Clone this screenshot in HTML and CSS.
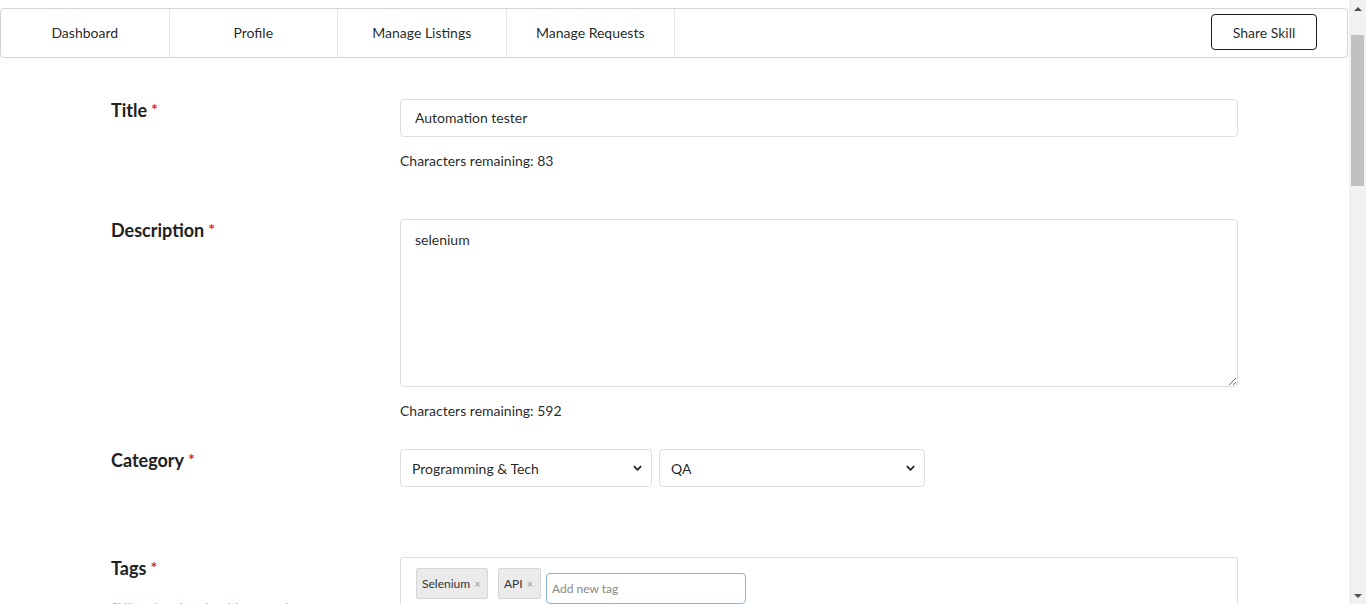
FILE: index.html
```html
<!DOCTYPE html>
<html>
<head>
<meta charset="utf-8">
<link rel="stylesheet" href="styles.css">
</head>
<body>
<div class="page">
<nav class="menu">
  <a class="item">Dashboard</a>
  <a class="item">Profile</a>
  <a class="item">Manage Listings</a>
  <a class="item">Manage Requests</a>
  <div class="right">
    <button class="share">Share Skill</button>
  </div>
</nav>
<form class="form">
  <div class="row row-title">
    <div class="label-col"><h3 class="label req">Title</h3></div>
    <div class="field-col">
      <input class="input" type="text" value="Automation tester">
      <div class="hint">Characters remaining: 83</div>
    </div>
  </div>
  <div class="row row-desc">
    <div class="label-col"><h3 class="label req">Description</h3></div>
    <div class="field-col">
      <textarea class="textarea">selenium</textarea>
      <div class="hint">Characters remaining: 592</div>
    </div>
  </div>
  <div class="row row-cat">
    <div class="label-col"><h3 class="label req">Category</h3></div>
    <div class="field-col selects">
      <div class="select sel-1">Programming &amp; Tech<svg class="chev" viewBox="0 0 10 6" width="9" height="6"><path d="M1 1l4 4 4-4" fill="none" stroke="#222" stroke-width="2"/></svg></div>
      <div class="select sel-2">QA<svg class="chev" viewBox="0 0 10 6" width="9" height="6"><path d="M1 1l4 4 4-4" fill="none" stroke="#222" stroke-width="2"/></svg></div>
    </div>
  </div>
  <div class="row row-tags">
    <div class="label-col">
      <h3 class="label req">Tags</h3>
      <p class="sub">Skills related to the things you know</p>
    </div>
    <div class="field-col">
      <div class="tagbox">
        <span class="tag tag-1">Selenium <span class="x">×</span></span>
        <span class="tag tag-2">API <span class="x">×</span></span>
        <input class="taginput" type="text" placeholder="Add new tag">
      </div>
    </div>
  </div>
</form>
</div>
<div class="scrollbar">
  <div class="sb-btn"><svg width="8" height="4" viewBox="0 0 8 4"><path d="M0 4L4 0L8 4Z" fill="#505050"/></svg></div>
  <div class="sb-track"><div class="sb-thumb"></div></div>
  <div class="sb-btn"><svg width="8" height="4" viewBox="0 0 8 4"><path d="M0 0L8 0L4 4Z" fill="#505050"/></svg></div>
</div>
</body>
</html>
```

FILE: styles.css
```css
html, body {
  margin: 0;
  padding: 0;
  height: 100%;
  overflow: hidden;
}
body {
  display: flex;
  font-family: Lato, "Open Sans", sans-serif;
  font-size: 14px;
  color: rgba(0,0,0,0.87);
  background: #fff;
}
.page {
  flex: 1;
  min-width: 0;
  height: 604px;
  overflow: hidden;
}
.scrollbar {
  width: 17px;
  flex: none;
  height: 604px;
  background: #f1f1f1;
  display: flex;
  flex-direction: column;
}
.sb-btn {
  height: 17px;
  display: flex;
  align-items: center;
  justify-content: center;
  flex: none;
}
.sb-track {
  flex: 1;
  padding: 18px 2px 0;
}
.sb-thumb {
  height: 151px;
  background: #c1c1c1;
}
.menu {
  display: flex;
  align-items: stretch;
  height: 48px;
  border: 1px solid #d4d4d5;
  border-radius: 4px;
  margin: 8px 1px 0 0;
  background: #fff;
}
.item {
  width: 167.5px;
  flex: none;
  display: flex;
  align-items: center;
  justify-content: center;
  border-right: 1px solid #e6e6e6;
  font-size: 14px;
  color: rgba(0,0,0,0.87);
  padding-bottom: 2px;
}
.right {
  margin-left: auto;
  display: flex;
  align-items: center;
  padding-right: 30px;
  padding-bottom: 2px;
}
.share {
  width: 106px;
  height: 36px;
  border: 1px solid #1b1c1d;
  border-radius: 4px;
  background: #fff;
  font-family: Lato, sans-serif;
  font-size: 14px;
  color: rgba(0,0,0,0.87);
  padding: 0;
}
.form {
  padding-left: 111px;
}
.row {
  display: flex;
}
.label-col {
  width: 289px;
  flex: none;
}
.field-col {
  width: 838px;
  flex: none;
}
.label {
  margin: 0;
  font-size: 18px;
  line-height: 22px;
  font-weight: 700;
  color: #212121;
  padding-top: 0;
}
.req::after {
  content: "*";
  color: #db2828;
  font-size: 16px;
  margin-left: 4px;
  vertical-align: top;
  position: relative;
  top: -1px;
}
.row-title { margin-top: 41px; }
.row-desc { margin-top: 48px; }
.row-cat { margin-top: 28px; }
.row-tags { margin-top: 70px; }
.input {
  box-sizing: border-box;
  width: 838px;
  height: 38px;
  border: 1px solid #dedede;
  border-radius: 4px;
  padding: 0 14px 2px;
  font-family: Lato, sans-serif;
  font-size: 14px;
  color: rgba(0,0,0,0.87);
  outline: none;
  display: block;
}
.textarea {
  box-sizing: border-box;
  display: block;
  width: 838px;
  height: 168px;
  border: 1px solid #dedede;
  border-radius: 4px;
  padding: 10px 14px;
  font-family: Lato, sans-serif;
  font-size: 14px;
  line-height: 20px;
  color: rgba(0,0,0,0.87);
  outline: none;
  resize: vertical;
}
.hint {
  margin-top: 14px;
  line-height: 20px;
  font-size: 14px;
  color: rgba(0,0,0,0.87);
}
.selects {
  display: flex;
  gap: 7px;
}
.select {
  box-sizing: border-box;
  height: 38px;
  border: 1px solid #dedede;
  border-radius: 4px;
  display: flex;
  align-items: center;
  padding: 0 11px;
  font-size: 14px;
  color: rgba(0,0,0,0.87);
}
.sel-1 { width: 252px; }
.sel-2 { width: 266px; }
.chev { margin-left: auto; margin-right: -2px; }
.tagbox {
  box-sizing: border-box;
  width: 838px;
  height: 120px;
  border: 1px solid #dedede;
  border-radius: 2px;
  padding: 10px 15px;
  display: flex;
  align-items: flex-start;
}
.tag {
  box-sizing: border-box;
  height: 31px;
  display: inline-flex;
  align-items: center;
  padding: 0 5px;
  background: #ebebeb;
  border: 1px solid #d6d6d6;
  border-radius: 2px;
  font-size: 12px;
  color: #333;
}
.tag-1 { width: 72px; margin-right: 10px; }
.tag-2 { width: 43px; margin-right: 5px; }
.tag .x {
  color: #999;
  font-size: 11px;
  margin-left: 4px;
}
.taginput {
  box-sizing: border-box;
  width: 200px;
  height: 31px;
  margin-top: 5px;
  border: 1px solid #85b7d9;
  border-radius: 4px;
  padding: 0 5px;
  font-family: Lato, sans-serif;
  font-size: 12px;
  outline: none;
}
.taginput::placeholder { color: #888; }
.sub {
  margin: 21px 0 0;
  font-size: 13px;
  color: #aaa;
}
```
